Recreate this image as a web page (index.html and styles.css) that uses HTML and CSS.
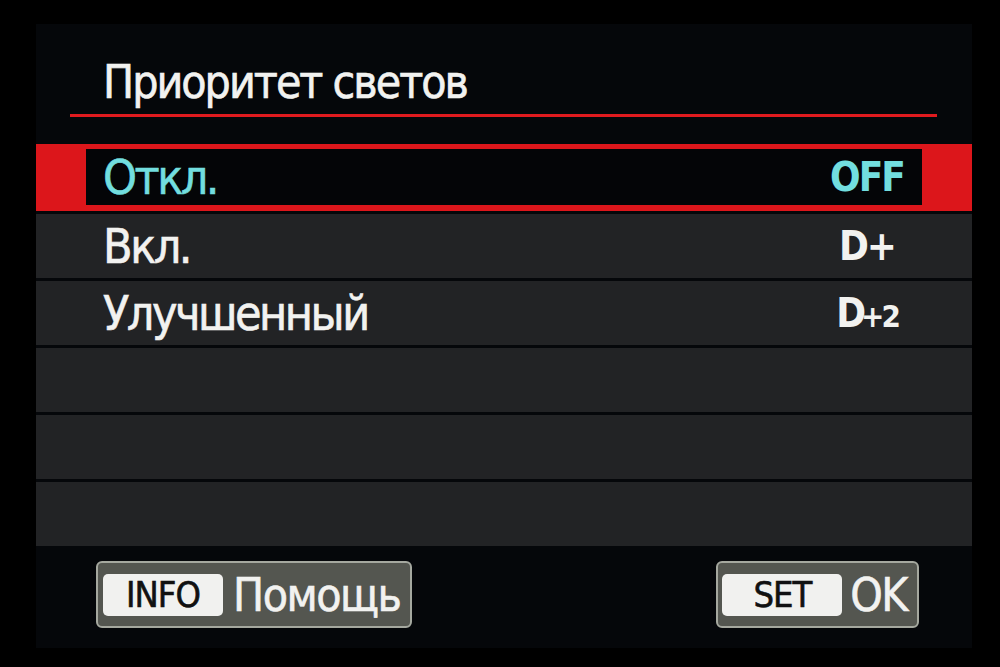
FILE: index.html
```html
<!DOCTYPE html>
<html lang="ru">
<head>
  <meta charset="UTF-8" />
  <title>Приоритет светов</title>
  <link rel="stylesheet" href="styles.css">
</head>
<body>
  <div class="screen">
    <header class="title">Приоритет светов</header>
    <div class="title-line"></div>

    <ul class="menu">
      <li class="row selected">
        <div class="cell">
          <span class="label">Откл.</span>
          <span class="value">OFF</span>
        </div>
      </li>
      <li class="row">
        <div class="cell">
          <span class="label">Вкл.</span>
          <span class="value">D+</span>
        </div>
      </li>
      <li class="row">
        <div class="cell">
          <span class="label">Улучшенный</span>
          <span class="value">D<small>+2</small></span>
        </div>
      </li>
      <li class="row"></li>
      <li class="row"></li>
      <li class="row"></li>
    </ul>

    <footer class="footer">
      <div class="hint">
        <span class="key">INFO</span>
        <span class="hint-text">Помощь</span>
      </div>
      <div class="hint hint-set">
        <span class="key">SET</span>
        <span class="hint-text">OK</span>
      </div>
    </footer>
  </div>
</body>
</html>
```

FILE: styles.css
```css
* {margin: 0; padding: 0; box-sizing: border-box;}
body {
  background: #000;
  font-family: 'DejaVu Sans Condensed', 'DejaVu Sans', sans-serif;
  font-stretch: semi-condensed;
  color: #f2f2f0;
  -webkit-text-stroke: 0.6px currentColor;
  width: 1000px;
  height: 667px;
  overflow: hidden;
}
.screen {
  margin: 24px 0 0 36px;
  width: 936px;
  height: 624px;
  background: #05070a;
  display: flex;
  flex-direction: column;
}
.title {
  height: 90px;
  padding: 33px 0 0 67px;
  font-size: 46px;
  line-height: 50px;
  letter-spacing: -2px;
}
.title-line {
  height: 3px;
  margin: 0 35px 0 34px;
  background: #e01a1e;
}
.menu {
  list-style: none;
  margin-top: 27px;
  display: flex;
  flex-direction: column;
  gap: 3px;
}
.row {
  height: 64px;
  background: #222325;
  padding: 0 50px;
}
.row.selected {
  height: 67px;
  background: #dc161b;
  padding: 5px 50px 6px;
}
.cell {
  height: 100%;
  display: flex;
  align-items: center;
  padding-left: 17px;
}
.selected .cell {
  background: #040507;
}
.label {
  flex: 1;
  font-size: 48px;
  letter-spacing: -2.5px;
  line-height: 1;
}
.value {
  width: 110px;
  text-align: center;
  font-size: 40px;
  font-weight: 700;
  letter-spacing: -2px;
  line-height: 1;
  -webkit-text-stroke: 0;
}
.value small {
  font-size: 31px;
  letter-spacing: -3px;
  margin-left: -3px;
}
.selected .label, .selected .value {
  color: #72dedf;
}
.footer {
  display: flex;
  justify-content: space-between;
  padding: 15px 53px 0 60px;
}
.hint {
  height: 67px;
  display: flex;
  align-items: center;
  gap: 10px;
  padding: 0 10px 0 5px;
  background: #545650;
  border: 2px solid #a5a89f;
  border-radius: 6px;
}
.hint-set {
  padding-left: 4px;
  gap: 8px;
}
.key {
  width: 120px;
  height: 42px;
  display: flex;
  align-items: center;
  justify-content: center;
  background: #f1f1ef;
  color: #111;
  border-radius: 5px;
  font-size: 36px;
  letter-spacing: -1px;
}
.hint-text {
  font-size: 46px;
  letter-spacing: -1.5px;
  line-height: 1;
}
```
